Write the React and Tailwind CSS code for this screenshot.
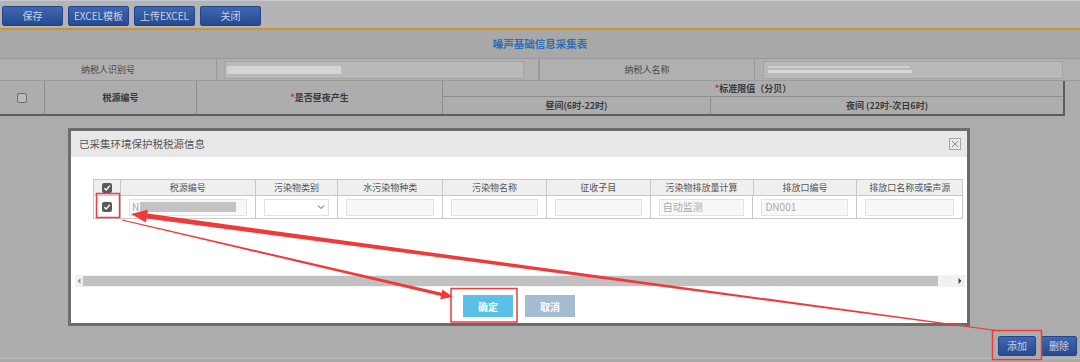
import React from "react";

const F = { fontFamily: '"Noto Sans CJK SC", "Liberation Sans", sans-serif' };

function TopBtn({ children, w = "w-[61px]" }) {
  return (
    <div className={`${w} h-[20px] rounded-[2px] bg-gradient-to-b from-[#3f67b2] to-[#264a91] border border-[#23468a] flex items-center justify-center text-[10px] text-[#c9d2e3] leading-none`}>
      {children}
    </div>
  );
}

function Check({ checked }) {
  return checked ? (
    <div className="w-[10px] h-[10px] rounded-[2px] bg-[#5a5a5a] flex items-center justify-center">
      <svg width="8" height="8" viewBox="0 0 8 8">
        <path d="M1.3 4.2 L3.2 6 L6.8 1.8" stroke="#fff" strokeWidth="1.4" fill="none" />
      </svg>
    </div>
  ) : (
    <div className="w-[10px] h-[10px] rounded-[2px] border border-[#6e6e6e] bg-[#b9b9b9]" />
  );
}

const cols = [27, 135, 83, 105, 104, 104, 103, 104, 105];
const heads = ["", "税源编号", "污染物类别", "水污染物种类", "污染物名称", "征收子目", "污染物排放量计算", "排放口编号", "排放口名称或噪声源"];

function Modal() {
  return (
    <div className="absolute left-[68px] top-[128px] w-[902px] h-[198px] border-[3px] border-[#6c6c6c] bg-white flex flex-col">
      <div className="h-[26px] bg-[#e8e8e8] flex items-center justify-between pl-[8px] pr-[6px]">
        <span className="text-[10.5px] text-[#555]">已采集环境保护税税源信息</span>
        <div className="w-[12px] h-[12px] border border-[#a8a8a8] flex items-center justify-center">
          <svg width="8" height="8" viewBox="0 0 8 8">
            <path d="M1 1 L7 7 M7 1 L1 7" stroke="#8a8a8a" strokeWidth="1" />
          </svg>
        </div>
      </div>
      <div className="flex-1 flex flex-col">
        <div className="pl-[22px] pt-[22px]">
          <div className="w-[870px] border border-[#c9c9c9]">
            <div className="flex h-[16px] bg-[#efefef] border-b border-[#c9c9c9]">
              {cols.map((w, i) => (
                <div key={i} style={{ width: w }} className={`flex items-center justify-center text-[9px] text-[#555] ${i < 8 ? "border-r border-[#c9c9c9]" : ""}`}>
                  {i === 0 ? <Check checked /> : heads[i]}
                </div>
              ))}
            </div>
            <div className="flex h-[22px] bg-white">
              {cols.map((w, i) => (
                <div key={i} style={{ width: w }} className={`flex items-center ${i === 0 ? "justify-center" : "px-[8px]"} ${i < 8 ? "border-r border-[#c9c9c9]" : ""}`}>
                  {i === 0 && <Check checked />}
                  {i === 1 && (
                    <div className="w-full h-[17px] border border-[#e3e3e3] bg-[#f8f8f8] flex items-center pl-[2px] gap-[1px]">
                      <span className="text-[10px] text-[#aaa] leading-none">N</span>
                      <div className="w-[96px] h-[10px] bg-[#c3c3c3]" />
                    </div>
                  )}
                  {i === 2 && (
                    <div className="w-full h-[17px] border border-[#e3e3e3] bg-white flex items-center justify-end pr-[3px]">
                      <svg width="8" height="6" viewBox="0 0 8 6">
                        <path d="M1 1.5 L4 4.5 L7 1.5" stroke="#555" strokeWidth="1" fill="none" />
                      </svg>
                    </div>
                  )}
                  {i > 2 && (
                    <div className="w-full h-[17px] border border-[#e3e3e3] bg-[#f8f8f8] flex items-center pl-[3px] text-[10px] text-[#aaa] leading-none">
                      {i === 6 ? "自动监测" : i === 7 ? "DN001" : ""}
                    </div>
                  )}
                </div>
              ))}
            </div>
          </div>
        </div>
        <div className="mt-[56px] ml-[4px] mr-[2px] h-[12px] bg-[#f1f1f1] flex items-center">
          <div className="w-[8px] flex items-center justify-center">
            <svg width="4" height="6" viewBox="0 0 4 6"><path d="M3.5 0 L0.5 3 L3.5 6 Z" fill="#9a9a9a" /></svg>
          </div>
          <div className="w-[855px] h-[10px] bg-[#c1c1c1]" />
          <div className="flex-1 flex items-center justify-end pr-[3px]">
            <svg width="4" height="6" viewBox="0 0 4 6"><path d="M0.5 0 L3.5 3 L0.5 6 Z" fill="#444" /></svg>
          </div>
        </div>
        <div className="mt-[8px] flex justify-center gap-[12px]">
          <div className="w-[50px] h-[22px] bg-[#5bc0e8] flex items-center justify-center text-[10px] font-bold text-white">确定</div>
          <div className="w-[50px] h-[22px] bg-[#a4bcd2] flex items-center justify-center text-[10px] font-bold text-white">取消</div>
        </div>
      </div>
    </div>
  );
}

function Annotations() {
  return (
    <svg className="absolute left-0 top-0 pointer-events-none" width="1080" height="362" viewBox="0 0 1080 362">
      <rect x="96.5" y="193.5" width="23" height="24" fill="none" stroke="#ef3b3b" strokeWidth="1.5" />
      <rect x="451" y="288.5" width="66" height="33.5" fill="none" stroke="#ef3b3b" strokeWidth="1.5" />
      <rect x="992.5" y="330.5" width="49" height="29" fill="none" stroke="#ef3b3b" strokeWidth="1.5" />
      <polygon points="131,214 147.8,209.7 147.2,213.6 1000.1,330.5 999.9,331.5 146.6,218.6 146,222.5" fill="#f03a3a" />
      <polygon points="453,297 442.4,289.4 441.7,292.7 122.1,219.6 121.9,220.4 440.9,295.9 440.2,299.2" fill="#f03a3a" />
    </svg>
  );
}

export default function App() {
  return (
    <div style={F} className="relative w-[1080px] h-[362px] overflow-hidden bg-[#acacac] flex flex-col">
      {/* toolbar */}
      <div className="h-[28px] bg-[#b4b4b4] border-t border-[#c7cad3] flex items-start pt-[5px] pl-[2px] gap-[5px]">
        <TopBtn>保存</TopBtn>
        <TopBtn>EXCEL模板</TopBtn>
        <TopBtn>上传EXCEL</TopBtn>
        <TopBtn>关闭</TopBtn>
      </div>
      <div className="h-[2px] bg-[#cf922e]" />
      {/* title */}
      <div className="h-[29px] bg-[#a8a8a8] border-b border-[#9a9a9a] flex items-center justify-center">
        <span className="text-[10.5px] font-bold text-[#2f6db5]">噪声基础信息采集表</span>
      </div>
      {/* info row */}
      <div className="h-[22px] flex bg-[#b0b0b0] border-b border-[#9a9a9a]">
        <div className="w-[217px] border-r border-[#9a9a9a] flex items-center justify-center text-[9px] text-[#4a4a4a]">纳税人识别号</div>
        <div className="w-[323px] border-r-2 border-[#9a9a9a] flex items-center pl-[7px]">
          <div className="w-[300px] h-[18px] bg-[#b9b9b9] border border-[#a4a4a4] flex items-center pl-[2px]">
            <div className="w-[114px] h-[8px] bg-[#d4d4d4]" />
          </div>
        </div>
        <div className="w-[215px] border-r border-[#9a9a9a] flex items-center justify-center text-[9px] text-[#4a4a4a]">纳税人名称</div>
        <div className="flex-1 flex items-center pl-[8px]">
          <div className="w-[300px] h-[18px] bg-[#b9b9b9] border border-[#a4a4a4] flex flex-col justify-center gap-[2px] pl-[4px]">
            <div className="w-[142px] h-[2px] bg-[#cfcfcf]" />
            <div className="w-[144px] h-[3px] bg-[#d8d8d8]" />
          </div>
        </div>
      </div>
      {/* header row */}
      <div className="h-[35px] flex">
        <div className="w-[1065px] flex bg-[#adadad] border-b-2 border-r-2 border-[#5d5d5d]">
          <div className="w-[45px] border-r border-[#8e8e8e] flex items-center justify-center"><Check /></div>
          <div className="w-[152px] border-r border-[#8e8e8e] flex items-center justify-center text-[9px] font-bold text-[#3a3a3a]">税源编号</div>
          <div className="w-[246px] border-r border-[#8e8e8e] flex items-center justify-center text-[9px] font-bold text-[#3a3a3a]"><span className="text-[#c0302e]">*</span>是否昼夜产生</div>
          <div className="flex-1 flex flex-col">
            <div className="h-[16px] border-b border-[#8e8e8e] flex items-center justify-center text-[9px] font-bold text-[#3a3a3a]"><span className="text-[#c0302e]">*</span>标准限值（分贝）</div>
            <div className="flex-1 flex">
              <div className="w-[268px] border-r border-[#8e8e8e] flex items-center justify-center text-[9px] font-bold text-[#3a3a3a]">昼间(6时-22时)</div>
              <div className="flex-1 flex items-center justify-center text-[9px] font-bold text-[#3a3a3a]">夜间 (22时-次日6时)</div>
            </div>
          </div>
        </div>
      </div>
      {/* body */}
      <div className="flex-1 flex flex-col justify-end">
        <div className="flex justify-end gap-[5px] pr-[3px] pb-[2px]">
          <TopBtn w="w-[38px]">添加</TopBtn>
          <TopBtn w="w-[36px]">删除</TopBtn>
        </div>
        <div className="h-[4px] border-t border-[#bdbdbd] bg-[#a9a9a9]" />
      </div>
      <Modal />
      <Annotations />
    </div>
  );
}
